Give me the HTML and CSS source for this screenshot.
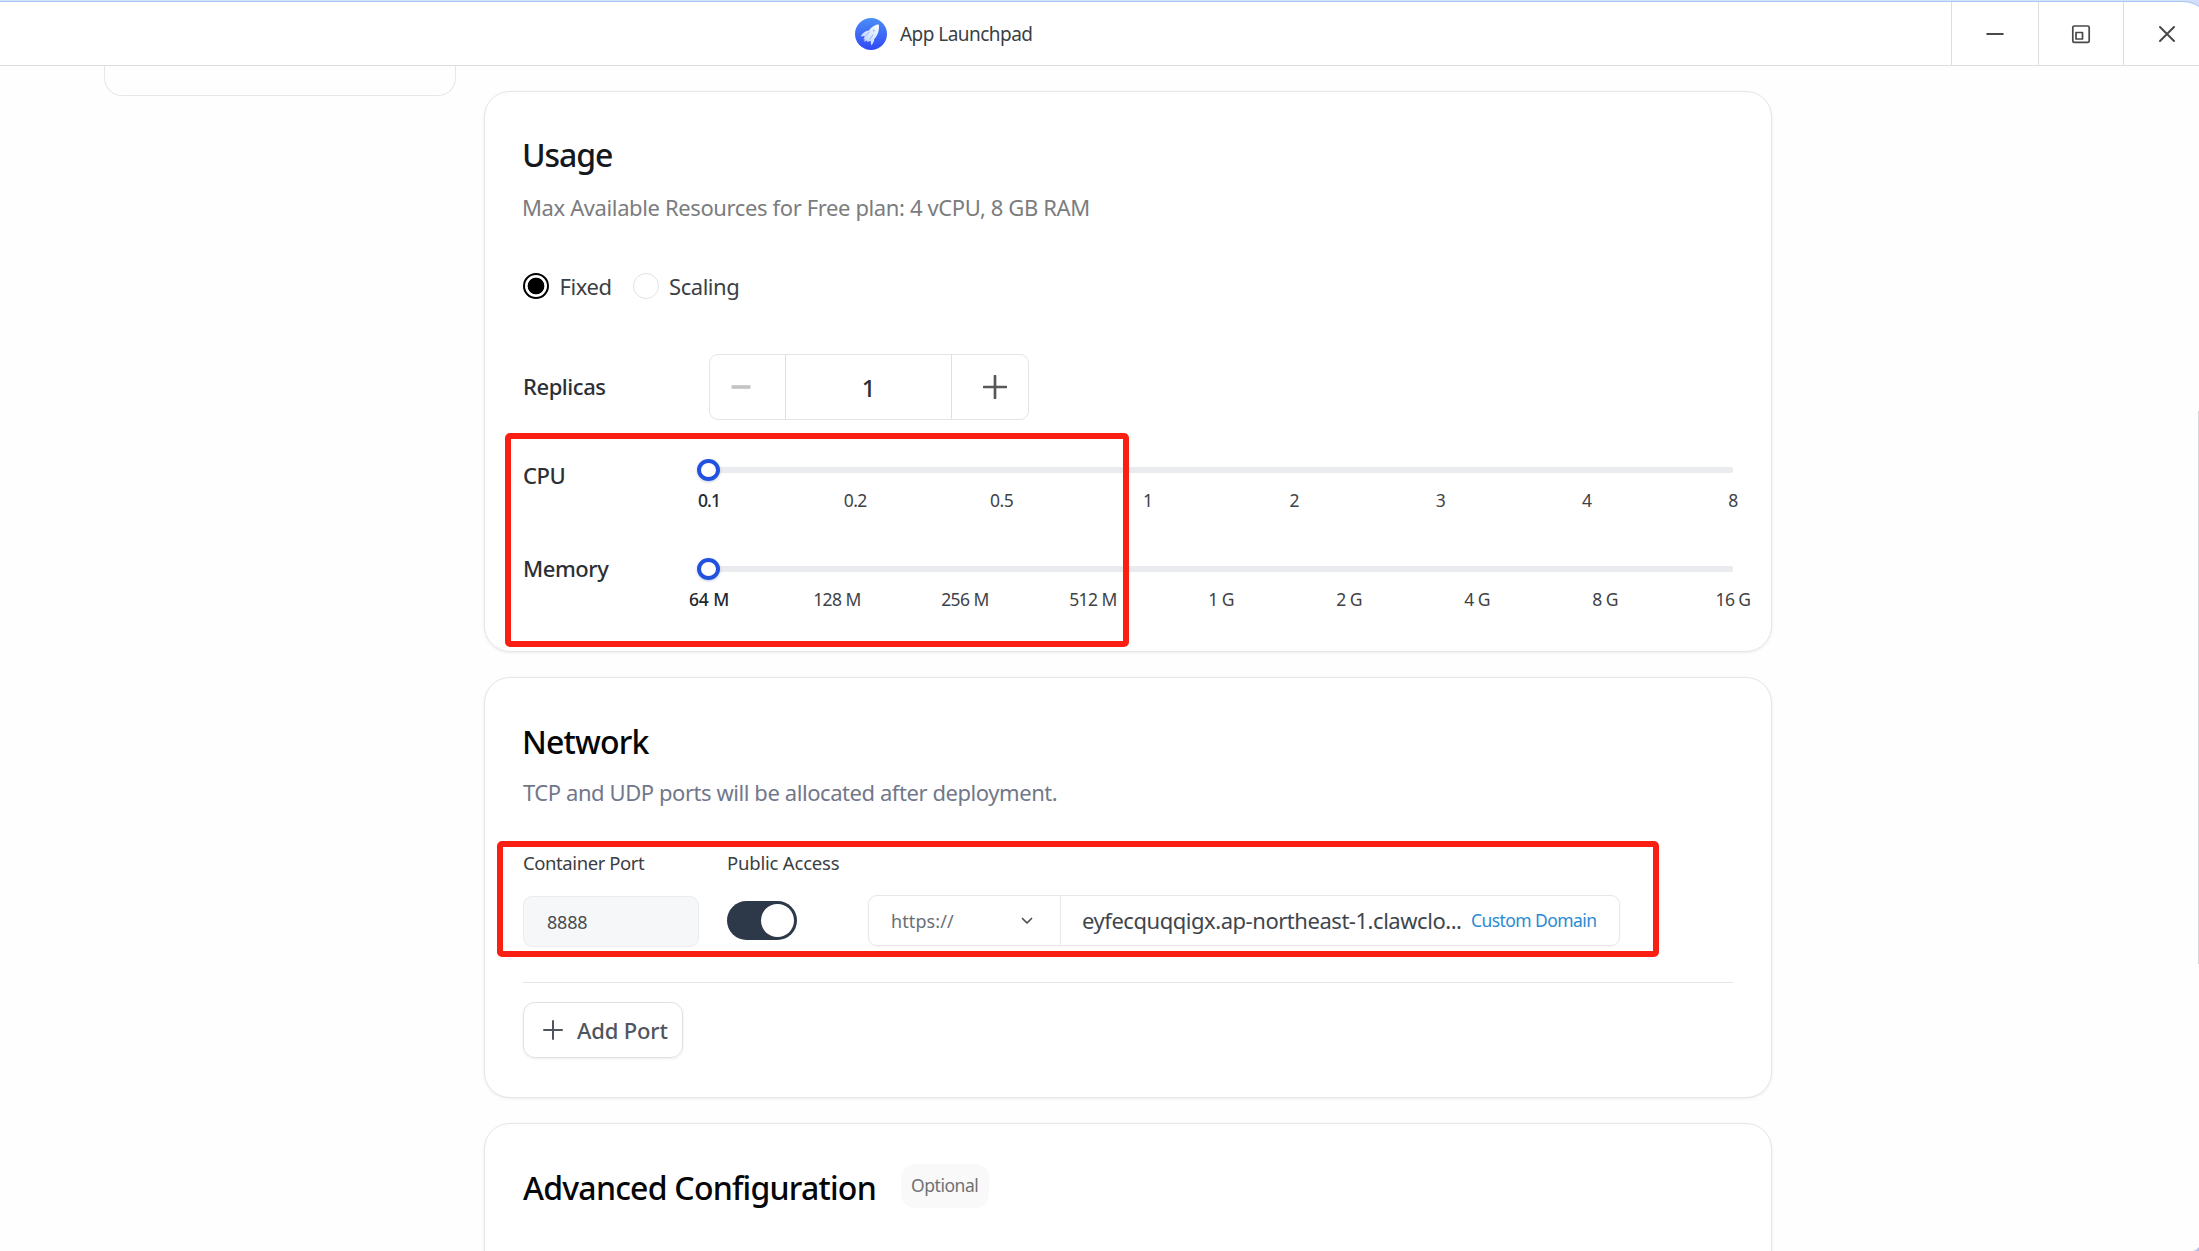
FILE: index.html
```html
<!DOCTYPE html>
<html lang="en">
<head>
<meta charset="utf-8">
<title>App Launchpad</title>
<link rel="stylesheet" href="styles.css">
</head>
<body>
<div class="window">
  <header class="titlebar">
    <div class="app">
      <svg class="app-icon" viewBox="0 0 32 32">
        <defs>
          <linearGradient id="disc" x1="0" y1="0" x2="0" y2="1"><stop offset="0" stop-color="#4a8df6"/><stop offset="1" stop-color="#3249f5"/></linearGradient>
          <linearGradient id="hull" x1="1" y1="0" x2="0" y2="1"><stop offset="0" stop-color="#fff"/><stop offset="1" stop-color="#b4cbfb"/></linearGradient>
        </defs>
        <circle cx="16" cy="16" r="16" fill="url(#disc)"/>
        <path d="M23.7 6.2c-4.3.8-7.7 3-9.8 6.4-3.3.2-6.4 2.2-8.3 5.900l4.300-.6-1.500 3.300 1.700.4-1.300 2.200 3.300-1.300.2 1.600 3.200-1.400.8 4.900c1.900-2.200 2.900-4.300 3-6.600 3.800-4 5.300-9.200 4.400-14.800z" fill="url(#hull)"/>
        <path d="M18.600 10.800l1.800 1.500-1.300 2.200-2-1.500z" fill="#bcd0fb"/>
        <path d="M10.500 18l3.600-4M15 21.200l3-4.500" stroke="#7fa6f8" stroke-width=".8"/>
      </svg>
      <span class="app-name">App Launchpad</span>
    </div>
    <div class="controls">
      <button class="ctl ctl-min" aria-label="Minimize"><svg width="20" height="20" viewBox="0 0 20 20"><path d="M2.200 10h15.600"/></svg></button>
      <button class="ctl ctl-max" aria-label="Restore"><svg width="20" height="20" viewBox="0 0 20 20"><rect x="1.800" y="2" width="16.400" height="16.400" rx="1.500"/><rect x="5" y="8.500" width="6.500" height="6.500"/></svg></button>
      <button class="ctl ctl-close" aria-label="Close"><svg width="20" height="20" viewBox="0 0 20 20"><path d="M3 3l14 14M17 3L3 17"/></svg></button>
    </div>
  </header>

  <main class="content">
    <aside class="side-panel"></aside>
    <div class="cards">
      <section class="card usage">
        <h2 class="title stem">Usage</h2>
        <p class="note stem">Max Available Resources for Free plan: 4 vCPU, 8 GB RAM</p>
        <div class="radios">
          <span class="radio checked"></span><span class="radio-label fixed">Fixed</span>
          <span class="radio"></span><span class="radio-label">Scaling</span>
        </div>
        <div class="replicas">
          <span class="label">Replicas</span>
          <div class="stepper">
            <button class="step minus" aria-label="Decrease"><svg width="20" height="4" viewBox="0 0 20 4"><path d="M.5 2h19"/></svg></button>
            <span class="count">1</span>
            <button class="step plus" aria-label="Increase"><svg width="24" height="24" viewBox="0 0 24 24"><path d="M1 12h22M12 1v22"/></svg></button>
          </div>
        </div>
        <div class="resource cpu">
          <span class="label">CPU</span>
          <div class="slider">
            <div class="rail"><span class="thumb"></span></div>
            <div class="ticks"><span class="on">0.1</span><span>0.2</span><span>0.5</span><span>1</span><span>2</span><span>3</span><span>4</span><span>8</span></div>
          </div>
        </div>
        <div class="resource memory">
          <span class="label">Memory</span>
          <div class="slider">
            <div class="rail"><span class="thumb"></span></div>
            <div class="ticks"><span class="on">64 M</span><span>128 M</span><span>256 M</span><span>512 M</span><span>1 G</span><span>2 G</span><span>4 G</span><span>8 G</span><span>16 G</span></div>
          </div>
        </div>
      </section>

      <section class="card network">
        <h2 class="title stem">Network</h2>
        <p class="note blue">TCP and UDP ports will be allocated after deployment.</p>
        <div class="ports">
          <div class="field field-port">
            <span class="field-label">Container Port</span>
            <div class="port-input">8888</div>
          </div>
          <div class="field field-access">
            <span class="field-label access">Public Access</span>
            <div class="access-row">
              <span class="toggle"><span class="knob"></span></span>
              <div class="address">
                <div class="protocol"><span>https://</span><svg width="12" height="8" viewBox="0 0 12 8"><path d="M1.500 1.500L6 6l4.500-4.500"/></svg></div>
                <div class="domain"><span class="host">eyfecquqqigx.ap-northeast-1.clawclo...</span><a class="custom">Custom Domain</a></div>
              </div>
            </div>
          </div>
        </div>
        <button class="add-port"><svg width="20" height="20" viewBox="0 0 20 20"><path d="M1 10h18M10 1v18"/></svg><span>Add Port</span></button>
      </section>

      <section class="card advanced">
        <h2 class="title">Advanced Configuration</h2>
        <span class="optional">Optional</span>
      </section>
    </div>
  </main>

  <div class="mark mark-resources"></div>
  <div class="mark mark-network"></div>
  <div class="scrollbar"></div>
  <svg class="corner corner-top" width="16" height="8" viewBox="0 0 16 8"><path d="M0 0H16V7Q10 2 0 1.500Z" fill="#d3defa"/><path d="M0 1.500Q10 2 16 6.500" fill="none" stroke="#a9c8f3"/></svg>
  <svg class="corner corner-bottom" width="6" height="4" viewBox="0 0 6 4"><path d="M6 0V4H0Q4 3 6 0Z" fill="#b9bce6"/></svg>
</div>
</body>
</html>
```
FILE: styles.css
```css
* { box-sizing: border-box; margin: 0; padding: 0; }

body {
  background: #fefefe;
  font-family: "Noto Sans", "Open Sans", sans-serif;
  color: #2c3035;
}

button { background: none; border: 0; font: inherit; color: inherit; }
svg { display: block; fill: none; stroke-linecap: round; stroke-linejoin: round; }

.window {
  position: relative;
  display: flex;
  flex-direction: column;
  width: 2199px;
  height: 1251px;
  overflow: hidden;
}

/* title bar */
.titlebar {
  display: flex;
  justify-content: space-between;
  flex: none;
  height: 66px;
  border-top: 1px solid #d3e4fa;
  border-bottom: 1px solid #dedfe0;
  box-shadow: inset 0 1px #a9c8f3;
  background: #fff;
}
.app { display: flex; align-items: center; gap: 13px; padding: 1px 0 0 855px; }
.app-icon { width: 32px; height: 32px; }
.app-name { font-size: 19px; letter-spacing: -0.54px; color: #3a3f46; line-height: 26px; }
.controls { display: flex; margin-top: 1px; }
.ctl { display: flex; align-items: center; border-left: 1px solid #dcddde; }
.ctl svg { stroke: #47494b; stroke-width: 2; }
.ctl-min { width: 87px; padding-left: 33px; }
.ctl-max { width: 85px; padding-left: 32px; }
.ctl-max svg { stroke-width: 1.7; }
.ctl-close { width: 76px; padding-left: 33px; }

/* page */
.content { display: flex; align-items: flex-start; flex: 1; min-height: 0; }
.side-panel {
  width: 352px;
  height: 30px;
  margin-left: 104px;
  border: 1px solid #e6e7e8;
  border-top: 0;
  border-radius: 0 0 18px 18px;
}
.cards { display: flex; flex-direction: column; gap: 25px; width: 1288px; margin: 25px 0 0 28px; }
.card {
  flex: none;
  border: 1px solid #e5e6e7;
  border-radius: 26px;
  padding: 0 38px;
  background: #fff;
  box-shadow: 0 1px 3px rgba(20, 24, 30, 0.07);
}
.title { font-size: 32px; font-weight: 500; line-height: 44px; letter-spacing: -0.8px; color: #050607; }
.note { font-size: 22px; line-height: 30px; letter-spacing: -0.38px; color: #7b7c7e; }
.note.blue { letter-spacing: -0.43px; color: #71788a; }
.stem { text-indent: -1px; }
.label { flex: none; width: 186px; font-size: 22px; font-weight: 500; letter-spacing: -0.45px; }

/* usage */
.usage { height: 561px; padding-top: 41px; }
.usage .title { color: #15181c; letter-spacing: -1.1px; }
.usage .note { margin-top: 15px; }
.radios { display: flex; align-items: center; height: 26px; margin-top: 51px; font-size: 22px; letter-spacing: -0.45px; line-height: 26px; color: #3b3f44; }
.radio { width: 26px; height: 26px; border: 1px solid #e2e3e4; border-radius: 50%; }
.radio.checked { border: 2px solid #000; background: radial-gradient(circle, #000 8px, #fff 8.7px); }
.radio-label { margin-left: 10px; }
.radio-label.fixed { margin: 0 24px 0 10px; width: 50px; text-indent: 0.5px; }
.replicas { display: flex; align-items: center; margin-top: 55px; }
.replicas .label { margin-top: -2px; }
.stepper { display: flex; width: 320px; height: 66px; border: 1px solid #e3e4e6; border-radius: 9px; }
.step { display: flex; align-items: center; }
.minus { width: 76px; padding-left: 21px; border-right: 1px solid #dfe0e2; }
.minus svg { stroke: #c3c4c5; stroke-width: 3.6; stroke-linecap: butt; }
.count { width: 165px; text-align: center; font-size: 24px; font-weight: 500; line-height: 66px; }
.plus { width: 77px; padding-left: 31px; border-left: 1px solid #dfe0e2; }
.plus svg { stroke: #57585a; stroke-width: 2.7; }
.resource { display: flex; height: 52px; }
.cpu { margin-top: 39px; }
.cpu .label { line-height: 33px; }
.memory { margin-top: 47px; }
.memory .label { line-height: 21px; }
.slider { width: 1024px; }
.rail { position: relative; height: 6px; margin: 8px 0 18px; background: #eaebee; border-radius: 2px; }
.thumb {
  position: absolute;
  left: -12px;
  top: -8px;
  width: 23px;
  height: 22px;
  border: 4px solid #2252dd;
  border-radius: 50%;
  background: #fff;
  box-shadow: 0 1px 3px rgba(30, 60, 160, 0.25);
}
.ticks { display: flex; justify-content: space-between; font-size: 17.5px; line-height: 19px; letter-spacing: -0.55px; white-space: nowrap; color: #3e4247; }
.ticks span { display: flex; justify-content: center; width: 0; }
.ticks .on { font-weight: 500; letter-spacing: -0.1px; color: #24282c; }
.cpu .ticks .on { letter-spacing: -1px; }

/* network */
.network { height: 421px; padding-top: 42px; }
.network .note { margin-top: 13px; }
.ports { display: flex; height: 132px; margin-top: 44px; border-bottom: 1px solid #e4e5e7; }
.field { display: flex; flex-direction: column; }
.field-port { width: 204px; }
.field-label { font-size: 18.5px; line-height: 24px; letter-spacing: -0.42px; color: #3a3e43; }
.field-label.access { letter-spacing: -0.2px; }
.port-input {
  width: 176px;
  height: 51px;
  margin-top: 21px;
  padding-left: 23px;
  border: 1px solid #eaecf1;
  border-radius: 9px;
  background: #f6f7f9;
  font-size: 18px;
  line-height: 51px;
  letter-spacing: -0.2px;
  color: #4a4d52;
}
.access-row { display: flex; align-items: flex-start; margin-top: 20px; }
.toggle { width: 70px; height: 39px; margin-top: 6px; padding: 3px 3.5px; border-radius: 20px; background: #2d3848; }
.knob { display: block; width: 33px; height: 33px; margin-left: auto; border-radius: 50%; background: #fff; }
.address { display: flex; width: 752px; height: 51px; margin-left: 71px; border: 1px solid #e6e8ed; border-radius: 9px; box-shadow: 0 1px 2px rgba(20, 24, 30, 0.04); }
.protocol { display: flex; align-items: center; justify-content: space-between; width: 192px; padding: 0 27px 0 22px; border-right: 1px solid #e6e8ed; font-size: 18px; letter-spacing: 0.1px; color: #6a6f75; }
.protocol svg { stroke: #4a4e54; stroke-width: 1.7; }
.domain { display: flex; align-items: center; padding: 0 0 2px 21px; }
.host { width: 389px; font-size: 22px; letter-spacing: -0.46px; color: #41464c; white-space: nowrap; }
.custom { font-size: 17.5px; letter-spacing: -0.58px; color: #2a8bd3; white-space: nowrap; }
.add-port {
  display: flex;
  align-items: center;
  gap: 14px;
  width: 160px;
  height: 56px;
  margin-top: 19px;
  padding-left: 19px;
  border: 1px solid #dfe1e5;
  border-radius: 12px;
  box-shadow: 0 1px 3px rgba(20, 24, 30, 0.08);
  font-size: 22px;
  font-weight: 500;
  letter-spacing: -0.15px;
  color: #4f5560;
  white-space: nowrap;
}
.add-port svg { stroke: #4f5560; stroke-width: 2; }

/* advanced */
.advanced { display: flex; height: 200px; padding-top: 42px; }
.advanced .title { width: 378px; white-space: nowrap; letter-spacing: -0.77px; }
.optional { height: 44px; margin-top: -2px; padding: 0 11px 0 10px; border-radius: 14px; background: #f9f9fa; font-size: 17.5px; line-height: 42px; letter-spacing: -0.45px; color: #6f7174; }

/* highlight frames over the cards */
.mark { position: absolute; border: 6px solid #f92013; border-radius: 5px; }
.mark-resources { left: 505px; top: 433px; width: 624px; height: 214px; }
.mark-network { left: 497px; top: 841px; width: 1162px; height: 116px; }

.scrollbar { position: absolute; right: 0; top: 411px; width: 1px; height: 553px; background: #d5d6d8; }
.corner { position: absolute; right: 0; }
.corner-top { top: 0; }
.corner-bottom { bottom: 0; }
```
